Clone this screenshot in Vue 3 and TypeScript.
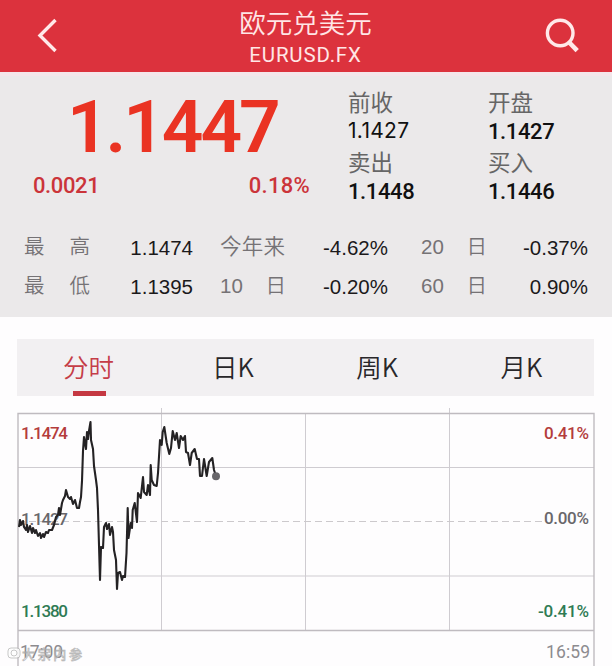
<template>
  <div class="page">
    <header class="nav">
      <svg class="nav-back" viewBox="0 0 24 38" width="24" height="38">
        <path d="M20.5 3 L5 18.5 L20.5 34" />
      </svg>
      <div class="nav-title">
        <span class="nav-name">欧元兑美元</span>
        <span class="nav-code">EURUSD.FX</span>
      </div>
      <svg class="nav-search" viewBox="0 0 36 38" width="36" height="38">
        <circle cx="16.2" cy="16" r="12.8" />
        <path d="M24.8 25 L33.2 33.6" class="handle" />
      </svg>
    </header>

    <section class="quote">
      <div class="quote-top">
        <div class="price-box">
          <div class="price">1.1447</div>
          <div class="change">
            <span>0.0021</span>
            <span class="percent">0.18%</span>
          </div>
        </div>
        <div class="fields">
          <div v-for="f in fields" :key="f.label" class="field">
            <span class="field-label">{{ f.label }}</span>
            <span class="field-value" :class="{ light: f.light }">{{ f.value }}</span>
          </div>
        </div>
      </div>
      <div class="stats">
        <template v-for="s in stats" :key="s.label.join('')">
          <span class="stat-label" :class="{ tight: s.label.length > 2 }">
            <span v-for="part in s.label" :key="part">{{ part }}</span>
          </span>
          <span class="stat-value">{{ s.value }}</span>
        </template>
      </div>
    </section>

    <nav class="tabs">
      <button v-for="(tab, i) in tabs" :key="tab" class="tab" :class="{ active: i === current }" @click="current = i">
        {{ tab }}
      </button>
    </nav>

    <svg class="chart" viewBox="0 404 612 262" width="612" height="262">
      <path class="grid" d="M161.5 408V630M305.5 413V630M449.5 408V630M18 467.5H594M18 576H594" />
      <path class="zero" d="M18 521.5H546" />
      <path class="frame" d="M18 670V413.5H594V670M18 630.5H594" />
      <text v-for="t in axis" :key="t.text" class="axis" :class="t.kind" :x="t.x" :y="t.y" :textLength="t.w">{{ t.text }}</text>
      <polyline class="line" :points="points" />
      <circle class="dot" cx="216" cy="476.3" r="4" />
      <g class="watermark">
        <rect x="8" y="648" width="12" height="10" rx="3" />
        <circle cx="14" cy="653" r="3" />
        <text x="22" y="658.5" textLength="60">大宗内参</text>
      </g>
    </svg>
  </div>
</template>

<script setup lang="ts">
import { ref } from 'vue'

interface Field { label: string; value: string; light?: boolean }
interface Stat { label: string[]; value: string }
interface AxisText { text: string; x: number; y: number; w: number; kind: 'up' | 'down' | 'flat' | 'time' }

const fields: Field[] = [
  { label: '前收', value: '1.1427', light: true },
  { label: '开盘', value: '1.1427' },
  { label: '卖出', value: '1.1448' },
  { label: '买入', value: '1.1446' },
]

const stats: Stat[] = [
  { label: ['最', '高'], value: '1.1474' },
  { label: ['今', '年', '来'], value: '-4.62%' },
  { label: ['20', '日'], value: '-0.37%' },
  { label: ['最', '低'], value: '1.1395' },
  { label: ['10', '日'], value: '-0.20%' },
  { label: ['60', '日'], value: '0.90%' },
]

const tabs = ['分时', '日K', '周K', '月K']
const current = ref(0)

const axis: AxisText[] = [
  { text: '1.1474', x: 21, y: 439, w: 47, kind: 'up' },
  { text: '0.41%', x: 544, y: 439, w: 45, kind: 'up' },
  { text: '1.1427', x: 21, y: 525, w: 47, kind: 'flat' },
  { text: '0.00%', x: 544, y: 524, w: 45, kind: 'flat' },
  { text: '1.1380', x: 21, y: 616.5, w: 47, kind: 'down' },
  { text: '-0.41%', x: 538, y: 616.5, w: 51, kind: 'down' },
  { text: '17:00', x: 20, y: 658, w: 43, kind: 'time' },
  { text: '16:59', x: 546, y: 658, w: 44, kind: 'time' },
]

const points = [
  '19,527 20,520 21,525 23,521 24,527 26,530 27,525 28,532 30,526 32,533 33,528 35,533 36,530',
  '38,536 40,533 41,538 43,534 44,537 46,532 48,533 49,530 52,530 54,525 56,517 58,515 59,508',
  '60,515 62,503 63,500 65,496 66,490 68,497 70,499 71,497 73,504 75,500 77,508 79,508 80,502',
  '81,497 82,481 83,451 84,437 86,449 87,432 88,439 89,431 90.5,422 91,440 93,449 94,466',
  '96,480 97,488 98,510 100,580 101,547 103,548 104,527 106,523 107,529 109,524 110,535 112,527',
  '113,532 114,550 116,560 117,589 118,573 120,572 122,580 123,576 125,577 126.5,553 127.7,508',
  '128.5,538 130.7,523 132,528 132.7,510 134.7,503 137,522 138,493 140.7,498 143,477 144,492',
  '146.7,495 148,485 150,495 150.7,465 151.7,480 154,485 156.7,486 158,473 160,440 161.7,445',
  '162.7,432 164.3,427 166.7,443 169.3,454 171,448 172.7,431 175,440 176.7,433 179,448 180.7,436',
  '183,440 185,436 186,452 188,453 190,465 191.7,453 194.7,449 197,459 199,459 200,476 202,476',
  '204,459 206.7,476 209,462 212.3,458 214,470 216,476',
].join(' ')
</script>

<style>
body { margin: 0; background: #fefdfe; }
</style>

<style scoped>
.page {
  width: 612px; height: 666px; overflow: hidden; background: #fefdfe;
  font-family: Roboto, "Noto Sans CJK SC", sans-serif;
}
.nav {
  display: flex; justify-content: space-between; align-items: center;
  box-sizing: border-box; height: 72px; padding: 0 32px 0 35px; background: #dc323d;
}
.nav svg { fill: none; stroke: #ffe9e9; stroke-width: 3.4; }
.nav .handle { stroke-width: 4.6; }
.nav-title { display: flex; flex-direction: column; align-items: center; padding-left: 8px; color: #ffe6e6; }
.nav-name { font-size: 26.5px; line-height: 34px; font-weight: 350; margin-top: 3px; }
.nav-code { font-size: 20.5px; line-height: 26px; letter-spacing: 0.8px; padding-top: 1px; }

.quote { box-sizing: border-box; height: 245px; background: #ebe9ea; border-top: 4px solid #f4e6ea; }
.quote-top { display: flex; height: 150px; }
.price-box { width: 348px; }
.price {
  margin: 14px 0 0 67px; color: #ea3323; font-size: 73px; line-height: 74px;
  font-weight: 600; letter-spacing: -3.1px;
}
.change {
  display: flex; justify-content: space-between; margin: 8px 38px 0 33px;
  color: #cb343a; font-size: 22px; line-height: 28px; font-weight: 500; letter-spacing: -0.4px;
}
.percent { letter-spacing: 0.3px; }
.fields { display: grid; grid-template-columns: 140px 100px; grid-auto-rows: 60px; padding-top: 12px; }
.field { display: flex; flex-direction: column; }
.field-label { color: #666; font-size: 22.5px; line-height: 30px; }
.field-value { color: #111; font-size: 22px; line-height: 27px; font-weight: 500; letter-spacing: -0.4px; }
.field-value.light { font-family: Inter, sans-serif; font-size: 21px; line-height: 25px; font-weight: 400; letter-spacing: 0.3px; }

.stats {
  display: grid; grid-template-columns: 66px 103px 93px 102px 99px 101px; grid-auto-rows: 39px;
  align-items: center; padding: 2px 0 0 24px;
}
.stat-label {
  display: flex; justify-content: space-between; align-items: center; justify-self: end;
  width: 66px; padding-bottom: 1px; color: #757275; font-family: "Liberation Sans", "Noto Sans CJK SC", sans-serif;
  font-size: 20.5px; font-weight: 350; line-height: 30px;
}
.stat-label.tight { box-sizing: border-box; padding-right: 1px; font-size: 21.5px; }
.stat-value { color: #1b191b; font-family: "Liberation Sans", sans-serif; font-size: 20.5px; text-align: right; padding-top: 1px; }

.tabs {
  display: grid; grid-template-columns: repeat(4, 1fr); width: 577px; height: 57px;
  margin: 22px 0 0 17px; background: #f2f0f2;
}
.tab {
  display: flex; flex-direction: column; align-items: center; border: 0; padding: 10px 1px 0 0;
  background: none; color: #29272a; font-family: "Noto Sans CJK SC", sans-serif;
  font-size: 25.5px; font-weight: 350; line-height: 34px;
}
.tab.active { color: #c53d48; }
.tab.active::after { content: ''; width: 33px; height: 5px; margin: 8px 0 0 1px; background: #c53842; }

.chart { display: block; margin-top: 8px; }
.grid { fill: none; stroke: #cfccd1; stroke-width: 1; }
.zero { stroke: #ccc9cc; stroke-width: 1.2; stroke-dasharray: 7 4; }
.frame { fill: none; stroke: #bfbbc0; stroke-width: 1.4; }
.line { fill: none; stroke: #242224; stroke-width: 2.1; stroke-linejoin: round; }
.dot { fill: #68666a; }
.axis { font-size: 17px; font-weight: 500; }
.axis.up { fill: #b43c3c; }
.axis.down { fill: #2f7b54; }
.axis.flat { fill: #69676b; }
.axis.time { fill: #8d8b8f; font-weight: 400; font-size: 17.5px; }
.watermark { fill: #fff; stroke: #aaa; stroke-width: 0.8; opacity: 0.8; font-size: 13px; }
</style>
